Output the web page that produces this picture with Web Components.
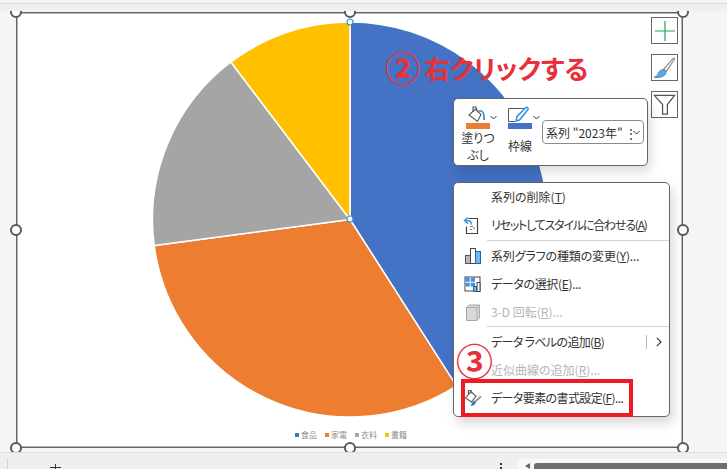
<!DOCTYPE html>
<html lang="ja">
<head>
<meta charset="utf-8">
<title>Chart</title>
<style>
  html, body { margin: 0; height: 100%; overflow: hidden; }
  body { font-family: "Noto Sans CJK JP", "Noto Sans", sans-serif; }
</style>
</head>
<body>
<slide-app>
  <chart-frame>
    <pie-chart></pie-chart>
  </chart-frame>

  <side-buttons></side-buttons>

  <call-out class="step2"><span style="font-size:35px;line-height:0;vertical-align:-3px;margin-right:4px">②</span>右クリックする</call-out>

  <mini-toolbar></mini-toolbar>

  <context-menu>
    <menu-item><span>系列の削除(<u>T</u>)</span></menu-item>
    <menu-item>
      <svg slot="icon" width="20" height="20" viewBox="0 0 20 20" fill="none">
        <path d="M5.500 3.500h9v15h-11v-7" stroke="#444" stroke-width="1.200"/>
        <path d="M7 14.500h2M7 11.500h3M11 12v2.500" stroke="#777"/>
        <path d="M8 9.500C8.800 6.500 6.500 5 3 5.500" stroke="#2f8fd8" stroke-width="1.500"/>
        <path d="M5 2.500L1.500 5.500L5 8.500" stroke="#2f8fd8" stroke-width="1.500"/>
      </svg>
      <span style="letter-spacing:-1.2px">リセットしてスタイルに合わせる(<u>A</u>)</span>
    </menu-item>
    <menu-sep></menu-sep>
    <menu-item>
      <svg slot="icon" width="20" height="20" viewBox="0 0 20 20">
        <rect x="2.500" y="9.500" width="5" height="8" fill="#b8b8b8" stroke="#555"/>
        <rect x="7.500" y="2.500" width="5" height="15" fill="#fff" stroke="#444"/>
        <rect x="12.500" y="5.500" width="5" height="12" fill="#7db4e4" stroke="#0f6cb4"/>
      </svg>
      <span style="letter-spacing:-.15px">系列グラフの種類の変更(<u>Y</u>)...</span>
    </menu-item>
    <menu-item>
      <svg slot="icon" width="20" height="20" viewBox="0 0 20 20">
        <rect x="2" y="3" width="15" height="14" fill="#fff" stroke="#444"/>
        <rect x="2.500" y="3.500" width="9.500" height="9.500" fill="#4a90d9"/>
        <path d="M7.200 3.500v9.500M2.500 8.200h9.500M2.500 13h9.500" stroke="#fff"/>
        <rect x="10.500" y="12.500" width="3" height="5" fill="#7db4e4" stroke="#0f6cb4"/>
        <rect x="14" y="8.500" width="3" height="9" fill="#fff" stroke="#444"/>
      </svg>
      <span style="letter-spacing:-.35px">データの選択(<u>E</u>)...</span>
    </menu-item>
    <menu-item disabled>
      <svg slot="icon" width="20" height="20" viewBox="0 0 20 20">
        <path d="M3.500 5.500L6 3h10.500v13L14 18.500H3.500z" fill="#d8d8d8" stroke="#aaa"/>
        <path d="M3.500 5.500H14v13M14 5.500L16.500 3" fill="none" stroke="#aaa"/>
      </svg>
      <span>3-D 回転(<u>R</u>)...</span>
    </menu-item>
    <menu-sep class="thin"></menu-sep>
    <menu-item submenu><span style="letter-spacing:-.65px">データ ラベルの追加(<u>B</u>)</span></menu-item>
    <menu-item disabled><span>近似曲線の追加(<u>R</u>)...</span></menu-item>
    <menu-item>
      <svg slot="icon" width="20" height="20" viewBox="0 0 20 20" fill="none">
        <path d="M2.500 10L8 3.500l5 4.500-4.500 6z" stroke="#555" stroke-width="1.100"/>
        <path d="M5.500 6.500V2.500h2.500v3" stroke="#555" stroke-width="1.100"/>
        <path d="M11 14.500L18 8.500" stroke="#999" stroke-width="2"/>
        <path d="M8 18c.5-3 1.500-4.800 3.500-4.800 1.300 0 1.700 1.500.8 2.500C11 17.300 9.800 17.800 8 18z" fill="#2f78c4"/>
      </svg>
      <span style="letter-spacing:-.6px">データ要素の書式設定(<u>F</u>)...</span>
    </menu-item>
  </context-menu>

  <call-out class="step3">③</call-out>
  <red-box></red-box>
</slide-app>

<script>
class SlideApp extends HTMLElement {
    constructor() {
        super();
        this.attachShadow({mode: 'open'});
    }
    connectedCallback() {
        this.shadowRoot.innerHTML = `
            <style>
            :host { display: flex; flex-direction: column; width: 727px; height: 469px; background: #f5f5f5; overflow: hidden; }
            .top { height: 3px; background: #f5f5f5; border-bottom: 1px solid #d9d9d9; }
            .band { height: 7px; background: #efefef; }
            .canvas { position: relative; flex: 1; overflow: hidden; }
            .status { position: relative; height: 16px; background: #efefef; border-top: 1px solid #dedede; display: flex; align-items: flex-end; overflow: hidden; }
            .tick { width: 1px; height: 10px; background: #d0d0d0; margin-left: 7px; }
            .plus { margin-left: 42px; width: 11px; height: 5px; position: relative; }
            .plus::before { content: ""; position: absolute; left: 5px; top: 0; width: 1px; height: 7px; background: #333; }
            .plus::after { content: ""; position: absolute; left: 0; top: 3px; width: 11px; height: 1px; background: #333; }
            .dots { margin-left: 439px; width: 2px; height: 6px; background: repeating-linear-gradient(#333 0 2px, transparent 2px 4px); }
            .track { margin-left: 15px; flex: 1; height: 10px; background: #f7f7f7; border-radius: 6px 0 0 0; display: flex; align-items: flex-end; padding-left: 8px; gap: 4px; }
            .arrow { width: 0; height: 0; border-style: solid; border-width: 3.500px 5px 3.500px 0; border-color: transparent #666 transparent transparent; }
            .thumb { flex: 1; height: 6px; background: #6e6e6e; border-radius: 3px 0 0 0; }
            </style>
            <div class="top"></div>
            <div class="band"></div>
            <div class="canvas"><slot></slot></div>
            <div class="status">
                <div class="tick"></div>
                <div class="plus"></div>
                <div class="dots"></div>
                <div class="track"><div class="arrow"></div><div class="thumb"></div></div>
            </div>
        `;
    }
}

class ChartFrame extends HTMLElement {
    constructor() {
        super();
        this.attachShadow({mode: 'open'});
    }
    connectedCallback() {
        const spots = [[0, 0], [50, 0], [100, 0], [0, 50], [100, 50], [0, 100], [50, 100], [100, 100]];
        const handles = spots.map(s => `<i style="left:${s[0]}%;top:${s[1]}%"></i>`).join('');
        this.shadowRoot.innerHTML = `
            <style>
            :host { display: block; position: absolute; left: 16px; top: 1px; width: 667px; height: 436px; background: #fff; box-shadow: inset 0 0 0 1.500px #666; }
            i { position: absolute; width: 8px; height: 8px; margin: -6px 0 0 -6px; background: #fff; border: 2px solid #595959; border-radius: 50%; }
            </style>
            <slot></slot>
            ${handles}
        `;
    }
}

class PieChart extends HTMLElement {
    constructor() {
        super();
        this.attachShadow({mode: 'open'});
    }
    slice(from, to, color) {
        const cx = 334, cy = 207.5, r = 197.5;
        const pt = a => {
            const rad = a * Math.PI / 180;
            return (cx + r * Math.sin(rad)).toFixed(1) + ' ' + (cy - r * Math.cos(rad)).toFixed(1);
        };
        const large = to - from > 180 ? 1 : 0;
        return `<path d="M${cx} ${cy}L${pt(from)}A${r} ${r} 0 ${large} 1 ${pt(to)}Z" fill="${color}" stroke="#fff" stroke-width="1.500"/>`;
    }
    connectedCallback() {
        const legend = [['#4472c4', '食品'], ['#ed7d31', '家電'], ['#a5a5a5', '衣料'], ['#ffc000', '書籍']];
        this.shadowRoot.innerHTML = `
            <style>
            :host { display: flex; flex-direction: column; align-items: center; width: 100%; height: 100%; }
            svg { display: block; flex: none; }
            .legend { display: flex; gap: 8px; margin-top: -2px; margin-left: 3px; font-size: 8px; line-height: 10px; color: #8f8f8f; }
            .legend span { display: flex; align-items: center; gap: 2px; }
            .legend b { width: 4px; height: 4px; }
            </style>
            <svg width="667" height="420" viewBox="0 0 667 420">
                ${this.slice(0, 147.4, '#4472c4')}
                ${this.slice(147.4, 262.4, '#ed7d31')}
                ${this.slice(262.4, 322.9, '#a5a5a5')}
                ${this.slice(322.9, 360, '#ffc000')}
                <circle cx="334" cy="10" r="3" fill="#fff" stroke="#2a9bd8" stroke-width="1.200"/>
                <circle cx="334" cy="207" r="3" fill="#fff" stroke="#2a9bd8" stroke-width="1.200"/>
            </svg>
            <div class="legend">
                ${legend.map(l => `<span><b style="background:${l[0]}"></b>${l[1]}</span>`).join('')}
            </div>
        `;
    }
}

class SideButtons extends HTMLElement {
    constructor() {
        super();
        this.attachShadow({mode: 'open'});
    }
    connectedCallback() {
        this.shadowRoot.innerHTML = `
            <style>
            :host { position: absolute; left: 651px; top: 6px; display: flex; flex-direction: column; gap: 10px; }
            div { width: 25px; height: 25px; background: #fff; border: 1.500px solid #666; display: flex; align-items: center; justify-content: center; }
            </style>
            <div><svg width="22" height="22" viewBox="0 0 22 22"><path d="M11 1v20M1 11h20" stroke="#21a651" stroke-width="1.200"/></svg></div>
            <div><svg width="25" height="25" viewBox="0 0 26 26" fill="none">
                <path d="M12 15L22 3.500c.8-.8 1.800 0 1.200.9L15 17z" fill="#fff" stroke="#888" stroke-width="1.200"/>
                <path d="M2 23c3 0 3.500-2 5-5 1.500-2.500 4-3.500 6.500-2 1.800 1.500 1 4-1 5.500C9.500 23.500 5 23.800 2 23z" fill="#62a3e0" stroke="#2f78c4" stroke-width=".800"/>
            </svg></div>
            <div><svg width="23" height="23" viewBox="0 0 24 24" fill="none">
                <path d="M1.500 2.500h21L15 12v10H10V12z" stroke="#555" stroke-width="1.300"/>
            </svg></div>
        `;
    }
}

class CallOut extends HTMLElement {
    constructor() {
        super();
        this.attachShadow({mode: 'open'});
    }
    connectedCallback() {
        const big = this.classList.contains('step3');
        this.shadowRoot.innerHTML = `
            <style>
            :host { position: absolute; color: #e8303a; font-weight: 700; white-space: nowrap; z-index: 3;
                left: ${big ? 456 : 385}px; top: ${big ? 329 : 38}px; font-size: ${big ? 37 : 26}px; line-height: ${big ? 40 : 38}px;
                font-family: "Noto Sans CJK JP", sans-serif; font-feature-settings: "palt"; }
            </style>
            <slot></slot>
        `;
    }
}

class MiniToolbar extends HTMLElement {
    constructor() {
        super();
        this.attachShadow({mode: 'open'});
    }
    connectedCallback() {
        const chev = `<svg class="chev" width="7" height="5" viewBox="0 0 7 5" fill="none"><path d="M.5 1L3.500 4L6.500 1" stroke="#333"/></svg>`;
        this.shadowRoot.innerHTML = `
            <style>
            :host { position: absolute; left: 453px; top: 87px; width: 193px; height: 66px; background: #fff;
                border: 1px solid #666; border-radius: 5px; box-shadow: 3px 6px 12px rgba(0,0,0,.14); display: flex; align-items: flex-start;
                font-size: 12px; line-height: 17px; color: #333; font-feature-settings: "palt"; }
            .tool { display: flex; flex-direction: column; align-items: center; flex: none; }
            .fill { width: 30px; margin: 7px 0 0 9px; }
            .line { width: 26px; margin: 7px 0 0 14px; }
            .icon { height: 17px; display: flex; align-items: center; align-self: flex-start; }
            .fill .icon { margin-left: 5px; gap: 5px; }
            .line .icon { margin-left: 1px; gap: 2px; }
            .chev { transform: translateY(3px); flex: none; }
            .bar { width: 24px; height: 6px; }
            .label { text-align: center; white-space: nowrap; }
            .line .label { margin-top: 8px; }
            .combo { margin: 21px 0 0 9px; width: 97px; height: 22px; border: 1px solid #8a8a8a; border-radius: 4px; display: flex; align-items: center;
                padding-left: 3px; overflow: hidden; white-space: nowrap; }
            .combo span { width: 87px; }
            </style>
            <div class="tool fill">
                <div class="icon">
                    <svg width="17" height="17" viewBox="0 0 17 17" fill="none">
                        <path d="M1 9L7.500 3L13 8.500L9.500 15.500z" fill="#fff" stroke="#555" stroke-width="1.100"/>
                        <path d="M5 6V1h3l1 4" stroke="#555" stroke-width="1.100"/>
                        <path d="M14.500 6c1.300.5 1.600 3 1.600 8" stroke="#2f8fd8" stroke-width="1.800"/>
                        <path d="M10 6.500c1.200-2.200 3-2.200 4.500-.5" stroke="#2f8fd8" stroke-width="1.500"/>
                    </svg>${chev}
                </div>
                <div class="bar" style="background:#ed7d31"></div>
                <div class="label">塗りつ<br>ぶし</div>
            </div>
            <div class="tool line">
                <div class="icon">
                    <svg width="23" height="17" viewBox="0 0 23 17" fill="none">
                        <path d="M.5 15.500V2.500H16" stroke="#555"/>
                        <path d="M.5 15.500H7" stroke="#555"/>
                        <path d="M8 15l1-4.500L18 1.500c1-1 2.800.800 2 2L11.500 14z" fill="#fff" stroke="#2f8fd8" stroke-width="1.500"/>
                    </svg>${chev}
                </div>
                <div class="bar" style="background:#4472c4"></div>
                <div class="label">枠線</div>
            </div>
            <div class="combo"><span>系列 "2023年" ⋮</span>${chev.replace('class="chev"', '')}</div>
        `;
    }
}

class ContextMenu extends HTMLElement {
    constructor() {
        super();
        this.attachShadow({mode: 'open'});
    }
    connectedCallback() {
        this.shadowRoot.innerHTML = `
            <style>
            :host { position: absolute; left: 453px; top: 171px; width: 215px; background: #fff; border: 1px solid #666;
                border-radius: 5px; padding-bottom: 4px; display: flex; flex-direction: column; box-shadow: 3px 6px 12px rgba(0,0,0,.16); z-index: 1;
                font-size: 12px; color: #333; font-feature-settings: "palt"; }
            </style>
            <slot></slot>
        `;
    }
}

class MenuItem extends HTMLElement {
    constructor() {
        super();
        this.attachShadow({mode: 'open'});
    }
    connectedCallback() {
        const sub = this.hasAttribute('submenu');
        const dim = this.hasAttribute('disabled');
        this.shadowRoot.innerHTML = `
            <style>
            :host { display: flex; align-items: center; height: 28px; color: ${dim ? '#b5b5b5' : '#333'}; white-space: nowrap; }
            .icon { width: 37px; flex: none; display: flex; justify-content: center; }
            .text { flex: 1; margin-top: -2px; }
            .more { display: flex; align-items: center; height: 14px; border-left: 1px solid #bbb; padding: 0 7px 0 9px; }
            </style>
            <div class="icon"><slot name="icon"></slot></div>
            <div class="text"><slot></slot></div>
            ${sub ? `<div class="more"><svg width="6" height="10" viewBox="0 0 6 10" fill="none"><path d="M.8 .8L5 5L.8 9.200" stroke="#333" stroke-width="1.100"/></svg></div>` : ''}
        `;
    }
}

class MenuSep extends HTMLElement {
    constructor() {
        super();
        this.attachShadow({mode: 'open'});
    }
    connectedCallback() {
        const thin = this.classList.contains('thin');
        this.shadowRoot.innerHTML = `
            <style>
            :host { display: block; height: 1px; margin: ${thin ? '0 0 1px 33px' : '1px 0 1px 33px'}; background: #d2d2d2; }
            </style>
        `;
    }
}

class RedBox extends HTMLElement {
    constructor() {
        super();
        this.attachShadow({mode: 'open'});
    }
    connectedCallback() {
        this.shadowRoot.innerHTML = `
            <style>
            :host { position: absolute; left: 461px; top: 368px; width: 164px; height: 30px; border: 4px solid #ed1c24; z-index: 2; }
            </style>
        `;
    }
}

customElements.define('slide-app', SlideApp);
customElements.define('chart-frame', ChartFrame);
customElements.define('pie-chart', PieChart);
customElements.define('side-buttons', SideButtons);
customElements.define('call-out', CallOut);
customElements.define('mini-toolbar', MiniToolbar);
customElements.define('context-menu', ContextMenu);
customElements.define('menu-item', MenuItem);
customElements.define('menu-sep', MenuSep);
customElements.define('red-box', RedBox);
</script>
</body>
</html>
